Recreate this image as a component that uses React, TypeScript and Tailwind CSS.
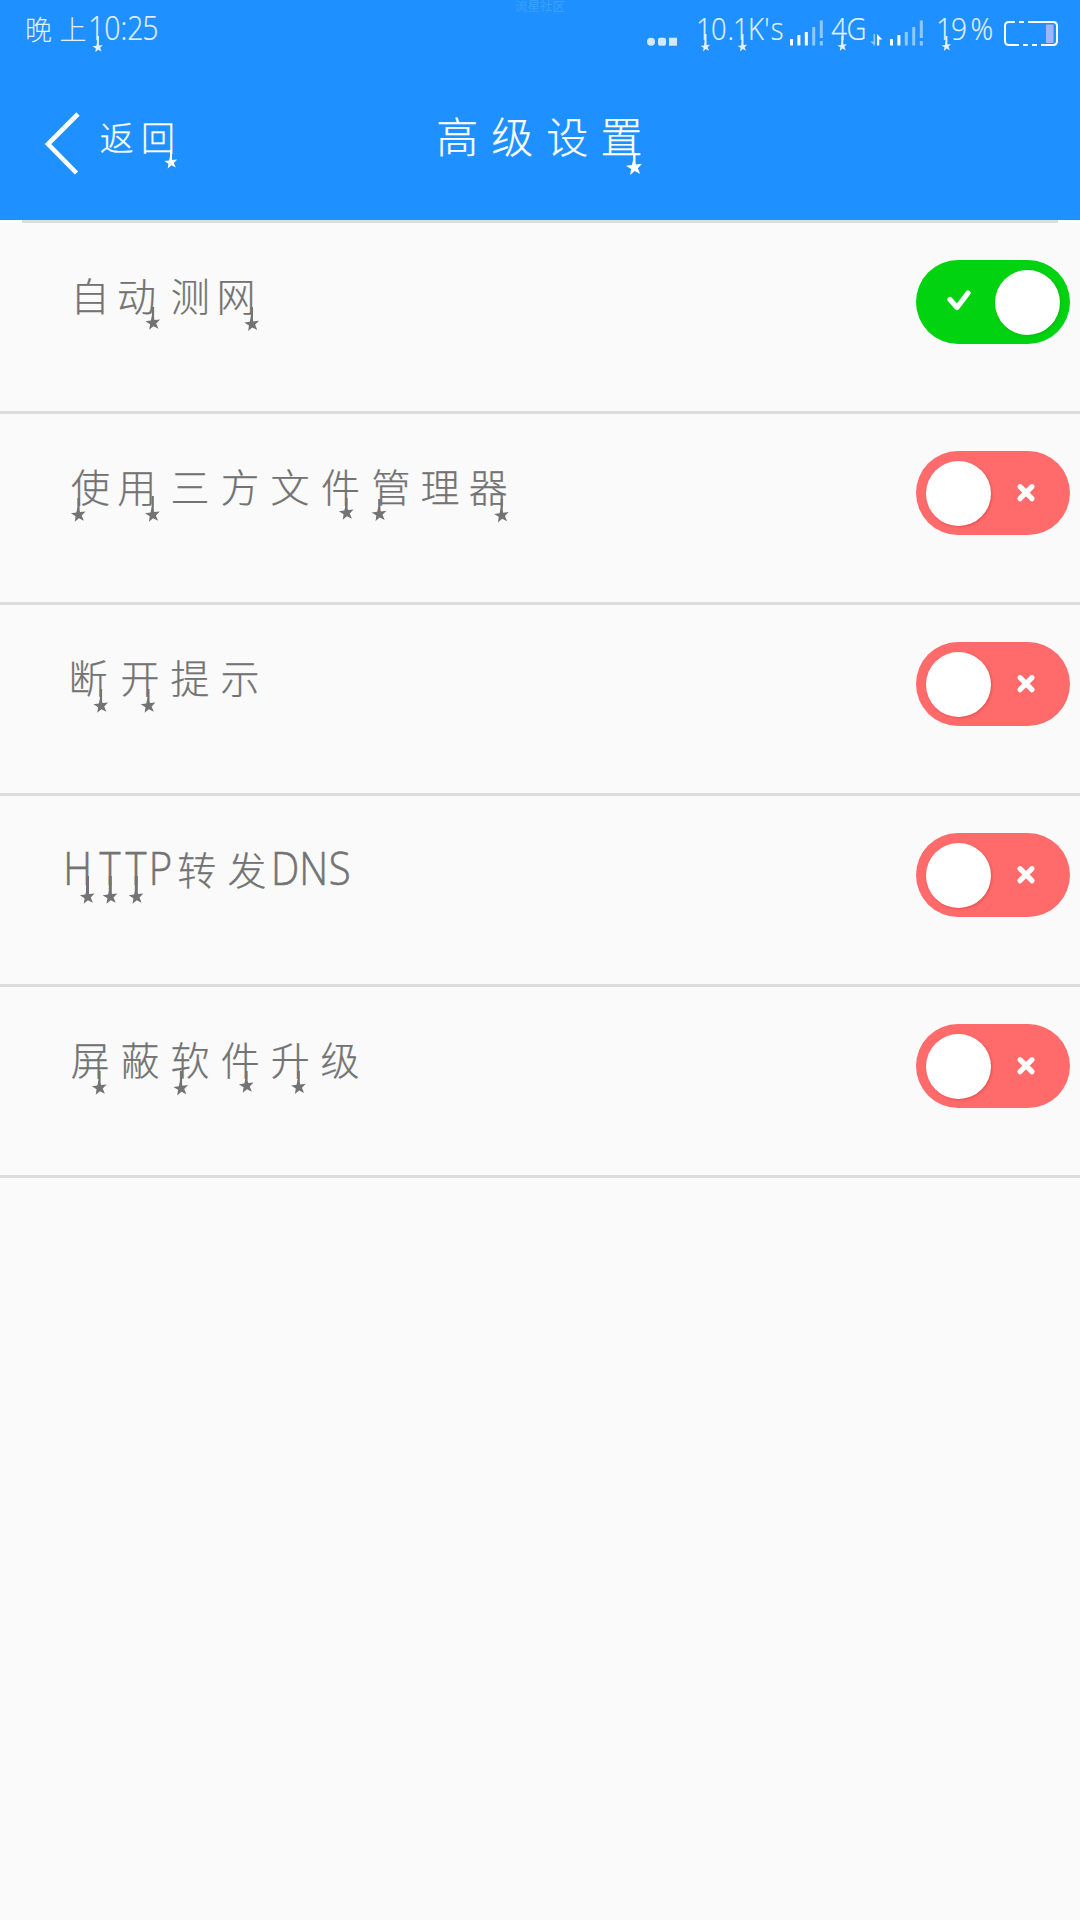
import React from "react";

type Glyph = [char: string, center: number];
type Tail = [x: number, top: number, starY: number];

const STAR = "M0,-7.6 L1.9,-2.4 L7.4,-2.3 L3.1,1.2 L4.6,6.6 L0,3.5 L-4.6,6.6 L-3.1,1.2 L-7.4,-2.3 L-1.9,-2.4 Z";

const isLatin = (c: string) => c.charCodeAt(0) < 256;

/* A line of characters, each centred on its own x, with optional star pendants below. */
function StarText({
  glyphs,
  tails = [],
  starScale = 1,
  stroke = 2,
  cjk,
  latin = "",
  className,
}: {
  glyphs: Glyph[];
  tails?: Tail[];
  starScale?: number;
  stroke?: number;
  cjk: string;
  latin?: string;
  className: string;
}) {
  return (
    <div className={`relative flex items-baseline font-light ${className}`}>
      {glyphs.map(([c, x], i) => (
        <span
          key={i}
          className="flex w-0 justify-center whitespace-nowrap"
          style={{ marginLeft: x - (i ? glyphs[i - 1][1] : 0) }}
        >
          <span
            className={
              isLatin(c)
                ? `inline-block shrink-0 font-['Open_Sans','Noto_Sans',sans-serif] ${latin}`
                : `inline-block shrink-0 font-['Noto_Sans_CJK_SC',sans-serif] ${cjk}`
            }
          >
            {c}
          </span>
        </span>
      ))}
      <svg className="absolute top-0 left-0 h-full w-full overflow-visible" fill="currentColor">
        {tails.map(([x, top, y], i) => (
          <g key={i}>
            <rect x={x - stroke / 2} y={top} width={stroke} height={y - top} />
            <path d={STAR} transform={`translate(${x} ${y}) rotate(-7) scale(${starScale})`} />
          </g>
        ))}
      </svg>
    </div>
  );
}

function Signal({ bright }: { bright: number }) {
  const tops = [39, 35, 32, 27];
  return (
    <svg className="h-[52px] w-[34px] shrink-0" fill="white">
      {tops.map((t, i) => (
        <rect key={i} x={i * 7.4} y={t} width="3" height={45.5 - t} opacity={i < bright ? 1 : 0.5} />
      ))}
      <rect x="29.8" y="20.5" width="3" height="17.5" opacity="0.5" />
      <rect x="29.8" y="41" width="3" height="4.5" opacity="0.5" />
    </svg>
  );
}

function StatusBar() {
  return (
    <div className="relative flex h-[52px] leading-[55px] text-[#e4f1ff]">
      <StarText
        className="w-[500px] shrink-0"
        cjk="text-[27px]"
        latin="text-[33px] scale-x-[.86] [-webkit-text-stroke:0.2px]"
        glyphs={[["晚", 38.5], ["上", 73], ["1", 96], ["0", 112.3], [":", 124.3], ["2", 135], ["5", 150.5]]}
        tails={[[97.9, 36, 47.3]]}
        starScale={0.7}
      />
      <div className="-mt-[2px] h-[22px] w-[80px] pl-[15px] font-['Noto_Sans_CJK_SC',sans-serif] text-[12.5px] leading-[16px] text-[#3ba0ff]">
        流星社区
      </div>
      <svg className="ml-[66px] h-[52px] w-[34px] shrink-0" fill="#d5e8fc">
        <circle cx="5" cy="41.7" r="4" />
        <rect x="12" y="37.7" width="8" height="8" rx="2" />
        <rect x="23" y="37.7" width="8" height="8" />
      </svg>
      <StarText
        className="w-[110px] shrink-0 leading-[57px]"
        cjk=""
        latin="text-[31px] scale-x-[.88] [-webkit-text-stroke:0.2px]"
        glyphs={[["1", 23.7], ["0", 38.7], [".", 51], ["1", 60.7], ["K", 76], ["'", 87], ["s", 97]]}
        tails={[[25.5, 34, 46.8], [62.5, 34, 46.8]]}
        starScale={0.65}
      />
      <Signal bright={3} />
      <StarText
        className="w-[46px] shrink-0"
        cjk=""
        latin="text-[32px] scale-x-[.86] [-webkit-text-stroke:0.2px]"
        glyphs={[["4", 15], ["G", 32.5]]}
        tails={[[18.3, 36, 46.3]]}
        starScale={0.65}
      />
      <svg className="h-[52px] w-[20px] shrink-0" fill="white">
        <path d="M2.7 34h1.6v12l-5-4.5h3.4z" opacity="0.5" transform="translate(.8 0)" />
        <path d="M7 45.5h2.2v-6h3.2l-5.4-5.5z" />
      </svg>
      <Signal bright={2} />
      <StarText
        className="w-[76px] shrink-0"
        cjk=""
        latin="text-[32px] scale-x-[.88] [-webkit-text-stroke:0.2px]"
        glyphs={[["1", 20.6], ["9", 35.5], ["%", 57.5]]}
        tails={[[22.4, 36, 46.3]]}
        starScale={0.65}
      />
      <svg className="h-[52px] w-[60px] shrink-0" fill="none" stroke="white" strokeWidth="2">
        <path d="M15 22h-6q-4 0-4 4v15q0 4 4 4h10M19 22h5M28 22h25q4 0 4 4v15q0 4-4 4h-12M23 45h5M32 45h5" />
        <rect x="46" y="24.5" width="7.5" height="18.5" fill="#9db6ff" stroke="none" />
      </svg>
    </div>
  );
}

function Switch({ on }: { on: boolean }) {
  return (
    <div
      className={`flex h-[84px] w-[154px] items-center rounded-full ${
        on ? "flex-row-reverse bg-[#02d311] px-[10px]" : "bg-[#ff6b6b] px-[9.5px]"
      }`}
    >
      <div
        className={`size-[65px] shrink-0 rounded-full bg-white ${
          on ? "shadow-[1px_1px_3px_rgba(0,110,0,0.25)]" : "shadow-[1px_1px_3px_rgba(170,0,0,0.28)]"
        }`}
      />
      <svg
        className={on ? "mr-[24px] size-[24px]" : "ml-[23px] size-[24px]"}
        fill="none"
        stroke="white"
        strokeWidth="5.2"
        strokeLinecap="round"
        viewBox="0 0 24 24"
      >
        {on ? <path d="M3 9.5L10 17.5L21 3" strokeLinejoin="round" /> : <path d="M6 5.7l12 12M18 5.7l-12 12" />}
      </svg>
    </div>
  );
}

const rows: { glyphs: Glyph[]; tails: Tail[]; on?: boolean; stroke?: number }[] = [
  {
    glyphs: [["自", 90], ["动", 136.5], ["测", 190.3], ["网", 236]],
    tails: [[153, 84, 99.7], [251.9, 84, 101]],
    on: true,
  },
  {
    glyphs: [["使", 90.5], ["用", 136.8], ["三", 190], ["方", 240], ["文", 290], ["件", 340.5], ["管", 391], ["理", 440], ["器", 488.3]],
    tails: [[78.5, 84, 100.7], [152.7, 82, 100.7], [346.5, 84, 98.7], [379.3, 85, 100], [501.7, 85, 101.3]],
  },
  {
    glyphs: [["断", 88], ["开", 140], ["提", 190], ["示", 240]],
    tails: [[101, 84, 100.7], [148.4, 84, 100.7]],
  },
  {
    glyphs: [["H", 77.3], ["T", 110.2], ["T", 136.3], ["P", 160], ["转", 196.7], ["发", 247], ["D", 285.5], ["N", 313.8], ["S", 339.5]],
    tails: [[87.5, 80, 100.7], [110.3, 80, 100.7], [136.3, 80, 100.7]],
    stroke: 3,
  },
  {
    glyphs: [["屏", 90.2], ["蔽", 140], ["软", 190], ["件", 240.2], ["升", 290.2], ["级", 340]],
    tails: [[99.5, 84, 100.7], [181, 84, 101.3], [246.5, 84, 98.7], [298.7, 84, 100]],
  },
];

export default function App() {
  return (
    <div className="min-h-[1920px] w-[1080px] overflow-hidden bg-[#fafafa]">
      <header className="h-[220px] bg-[#1e90ff] text-white">
        <StatusBar />
        <div className="flex h-[168px] leading-[166px]">
          <svg className="h-[168px] w-[90px] shrink-0" fill="none" stroke="white" strokeWidth="4.6">
            <path d="M78 62L48 92L76.5 121" />
          </svg>
          <StarText
            className="w-[310px] shrink-0 pt-[2px]"
            cjk="text-[34px] [-webkit-text-stroke:0.25px]"
            glyphs={[["返", 26.7], ["回", 68]]}
            tails={[[81, 98, 110.3]]}
            starScale={0.88}
          />
          <StarText
            className="w-[300px] shrink-0"
            cjk="text-[42px] [-webkit-text-stroke:0.25px]"
            glyphs={[["高", 57.3], ["级", 112.3], ["设", 167.3], ["置", 221.5]]}
            tails={[[234.3, 101, 115.3]]}
            stroke={2.4}
            starScale={1.1}
          />
        </div>
      </header>
      <div className="bg-white px-[22px]">
        <div className="h-[3px] bg-[#dcdcdc]" />
      </div>
      <main>
        {rows.map((row, i) => (
          <div key={i} className="flex h-[191px] justify-between border-b-[3px] border-[#dcdcdc] pr-[10px] text-[#737373]">
            <StarText
              className="h-[188px] w-[560px] leading-[142px]"
              cjk="text-[39px] [-webkit-text-stroke:0.25px]"
              latin="text-[46px] scale-x-[.87] [-webkit-text-stroke:0.6px]"
              glyphs={row.glyphs}
              tails={row.tails}
              stroke={row.stroke ?? 2.2}
            />
            <div className="pt-[37px]">
              <Switch on={!!row.on} />
            </div>
          </div>
        ))}
      </main>
    </div>
  );
}
